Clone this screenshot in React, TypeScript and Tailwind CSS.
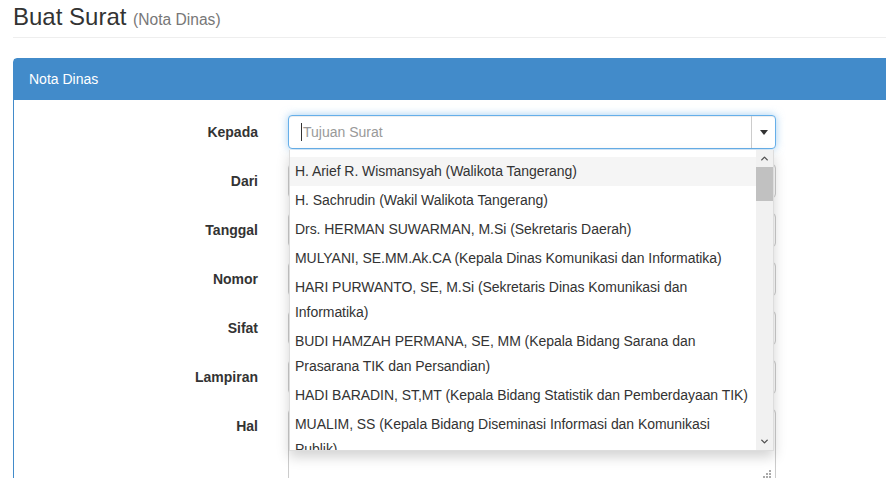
import { ChevronUp, ChevronDown } from "lucide-react";

const LABELS = ["Kepada", "Dari", "Tanggal", "Nomor", "Sifat", "Lampiran", "Hal"];

const OPTIONS = [
  "H. Arief R. Wismansyah (Walikota Tangerang)",
  "H. Sachrudin (Wakil Walikota Tangerang)",
  "Drs. HERMAN SUWARMAN, M.Si (Sekretaris Daerah)",
  "MULYANI, SE.MM.Ak.CA (Kepala Dinas Komunikasi dan Informatika)",
  "HARI PURWANTO, SE, M.Si (Sekretaris Dinas Komunikasi dan Informatika)",
  "BUDI HAMZAH PERMANA, SE, MM (Kepala Bidang Sarana dan Prasarana TIK dan Persandian)",
  "HADI BARADIN, ST,MT (Kepala Bidang Statistik dan Pemberdayaan TIK)",
  "MUALIM, SS (Kepala Bidang Diseminasi Informasi dan Komunikasi Publik)",
  "Dra. SITI NURJANAH (Kepala Bidang Persandian)",
];

function Select2() {
  return (
    <div className="relative w-[488px]">
      {/* select2 box, focused */}
      <div className="flex h-[34px] items-center rounded-[4px] border border-[#66afe9] bg-white shadow-[inset_0_1px_1px_rgba(0,0,0,0.075),0_0_8px_rgba(102,175,233,0.6)]">
        <div className="flex flex-1 items-center pl-[12px]">
          <span className="h-[18px] w-px bg-[#333]" />
          <span className="pl-px text-[14px] text-[#999]">Tujuan Surat</span>
        </div>
        <div className="flex h-full w-[24px] items-center justify-center border-l border-[#ccc]">
          <span className="h-0 w-0 border-x-[4px] border-t-[5px] border-x-transparent border-t-[#333]" />
        </div>
      </div>

      {/* results dropdown */}
      <div className="absolute left-px top-[35px] z-10 flex h-[301px] w-[485px] border border-[#ddd] border-t-0 bg-white shadow-[0_6px_12px_rgba(0,0,0,0.175)]">
        <ul className="flex-1 overflow-hidden pt-[7px] text-[14px] leading-[25px] text-[#333]">
          {OPTIONS.map((o, i) => (
            <li key={o} className={`py-[2px] pl-[5px] pr-0 tracking-[-0.05px] ${i === 0 ? "bg-[#f5f5f5]" : ""}`}>
              {o}
            </li>
          ))}
        </ul>
        <div className="flex w-[17px] flex-col bg-[#f1f1f1]">
          <div className="flex h-[17px] items-center justify-center text-[#505050]">
            <ChevronUp size={11} strokeWidth={3} />
          </div>
          <div className="h-[34px] bg-[#c1c1c1]" />
          <div className="flex-1" />
          <div className="flex h-[17px] items-center justify-center text-[#505050]">
            <ChevronDown size={11} strokeWidth={3} />
          </div>
        </div>
      </div>
    </div>
  );
}

export default function App() {
  return (
    <div className="h-[478px] w-[886px] overflow-hidden bg-white font-['Liberation_Sans',Arial,sans-serif] text-[14px] text-[#333]">
      <div className="w-[940px] pl-[13px]">
        {/* Page header */}
        <div className="border-b border-[#eee] pb-[4px] pt-[4px]">
          <h3 className="text-[24px] leading-[26px] font-normal">
            Buat Surat <small className="text-[15.6px] text-[#777]">(Nota Dinas)</small>
          </h3>
        </div>

        {/* Panel */}
        <div className="mt-[20px] rounded-t-[4px] border border-[#428bca]">
          <div className="flex h-[41px] items-center bg-[#428bca] px-[15px] text-white">Nota Dinas</div>
          <div className="flex flex-col gap-[15px] bg-white px-[15px] pt-[15px]">
            {LABELS.map((label) => (
              <div key={label} className="flex items-start gap-[30px]">
                <label className="w-[229px] pt-[7px] text-right font-bold leading-[20px]">{label}</label>
                {label === "Kepada" ? (
                  <Select2 />
                ) : label === "Hal" ? (
                  <div className="relative h-[74px] w-[488px] rounded-[4px] border border-[#ccc] shadow-[inset_0_1px_1px_rgba(0,0,0,0.075)]">
                    <svg className="absolute bottom-[4px] right-[4px]" width="8" height="8" viewBox="0 0 8 8">
                      <g fill="#aaa">
                        <rect x="6" y="0" width="2" height="2" />
                        <rect x="3" y="3" width="2" height="2" />
                        <rect x="6" y="3" width="2" height="2" />
                        <rect x="0" y="6" width="2" height="2" />
                        <rect x="3" y="6" width="2" height="2" />
                        <rect x="6" y="6" width="2" height="2" />
                      </g>
                    </svg>
                  </div>
                ) : (
                  <div className="h-[34px] w-[488px] rounded-[4px] border border-[#ccc] shadow-[inset_0_1px_1px_rgba(0,0,0,0.075)]" />
                )}
              </div>
            ))}
          </div>
        </div>
      </div>
    </div>
  );
}
